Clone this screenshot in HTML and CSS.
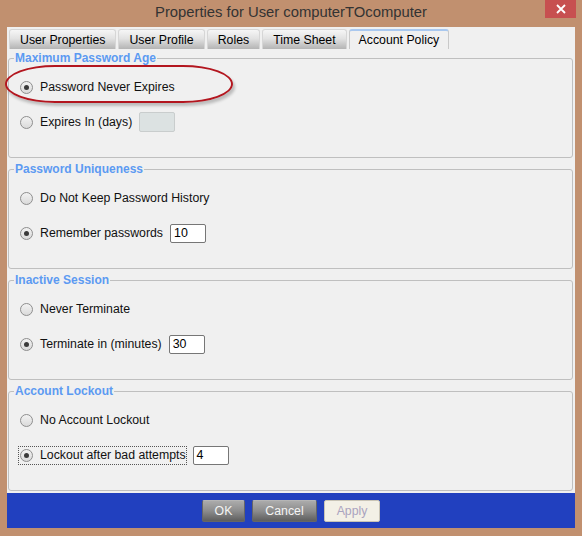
FILE: index.html
```html
<!DOCTYPE html>
<html lang="en">
<head>
  <meta charset="UTF-8">
  <title>Properties for User computerTOcomputer</title>
  <link rel="stylesheet" href="styles.css">
</head>
<body>
<div class="window">
  <div class="titlebar">
    <span></span>
    <span class="title">Properties for User computerTOcomputer</span>
    <span class="close">
      <svg width="10" height="10" viewBox="0 0 10 10"><path d="M1 1 L9 9 M9 1 L1 9" stroke="#fff" stroke-width="1.8"/></svg>
    </span>
  </div>

  <div class="frame">
    <div class="tabs">
      <div class="tab">User Properties</div>
      <div class="tab">User Profile</div>
      <div class="tab">Roles</div>
      <div class="tab">Time Sheet</div>
      <div class="tab active">Account Policy</div>
    </div>

    <div class="pane">
      <fieldset class="group">
        <legend>Maximum Password Age</legend>
        <div class="row">
          <label class="opt"><span class="radio checked"></span>Password Never Expires</label>
        </div>
        <div class="row">
          <label class="opt"><span class="radio"></span>Expires In (days)</label>
          <span class="field disabled"></span>
        </div>
      </fieldset>

      <fieldset class="group">
        <legend>Password Uniqueness</legend>
        <div class="row">
          <label class="opt"><span class="radio"></span>Do Not Keep Password History</label>
        </div>
        <div class="row">
          <label class="opt"><span class="radio checked"></span>Remember passwords</label>
          <span class="field">10</span>
        </div>
      </fieldset>

      <fieldset class="group">
        <legend>Inactive Session</legend>
        <div class="row">
          <label class="opt"><span class="radio"></span>Never Terminate</label>
        </div>
        <div class="row">
          <label class="opt"><span class="radio checked"></span>Terminate in (minutes)</label>
          <span class="field">30</span>
        </div>
      </fieldset>

      <fieldset class="group">
        <legend>Account Lockout</legend>
        <div class="row">
          <label class="opt"><span class="radio"></span>No Account Lockout</label>
        </div>
        <div class="row">
          <label class="opt focused"><span class="radio checked"></span>Lockout after bad attempts</label>
          <span class="field">4</span>
        </div>
      </fieldset>
    </div>

    <div class="buttons">
      <button class="btn">OK</button>
      <button class="btn">Cancel</button>
      <button class="btn off">Apply</button>
    </div>
  </div>

  <!-- red annotation ring drawn over the first option -->
  <div class="highlight"></div>
</div>
</body>
</html>
```

FILE: styles.css
```css
body {
  margin: 0;
  background: #c1906f;
  font-family: "Liberation Sans", Arial, sans-serif;
}

.window {
  position: relative;
  width: 582px;
  height: 536px;
  background: #c1906f;
}

.titlebar {
  display: grid;
  grid-template-columns: 1fr auto 1fr;
  align-items: start;
  height: 27px;
}
.title {
  padding-top: 3px;
  font-size: 14.8px;
  line-height: 18px;
  color: #333;
}
.close {
  justify-self: end;
  margin-right: 6px;
  width: 31px;
  height: 18px;
  background: #c75050;
  display: flex;
  align-items: center;
  justify-content: center;
}

.frame {
  margin: 0 7px;
  height: 501px;
  background: #f0f0f0;
  display: flex;
  flex-direction: column;
}

/* tabs */
.tabs {
  display: flex;
  gap: 2px;
  height: 22px;
  padding: 2px 0 0 2px;
  box-sizing: border-box;
}
.tab {
  height: 20px;
  padding: 0 10px;
  font-size: 12.3px;
  line-height: 20px;
  color: #000;
  border: 1px solid #d6d6d6;
  border-bottom: none;
  border-radius: 3px 3px 0 0;
  background: linear-gradient(#f6f6f6, #e2e2e2 45%, #b4b4b4);
  box-sizing: border-box;
}
.tab.active {
  background: #f0f0f0;
  border-color: #c9c9c9;
  border-top: 2px solid #a9c8ef;
  line-height: 18px;
  padding: 0 9px;
}

/* groups */
.pane {
  flex: 1;
  padding: 2px 2px 0 1px;
}
.group {
  margin: 4px 0 0;
  padding: 12px 10px 0 9px;
  height: 107px;
  box-sizing: border-box;
  border: 1px solid #bfbfbf;
  border-radius: 3px;
  display: flex;
  flex-direction: column;
  gap: 15px;
}
.group:first-child {
  margin-top: 0;
}
.group legend {
  padding: 0 1px;
  margin-left: -4px;
  font-size: 12px;
  font-weight: bold;
  line-height: 14px;
  color: #5c9af2;
}

.row {
  display: flex;
  align-items: center;
  height: 20px;
}
.opt {
  display: inline-flex;
  align-items: center;
  gap: 7px;
  height: 19px;
  padding-left: 1px;
  border: 1px dotted transparent;
  box-sizing: border-box;
  font-size: 12.3px;
  color: #111;
}
.opt.focused {
  border-color: #555;
}

.radio {
  width: 13px;
  height: 13px;
  border-radius: 50%;
  border: 1px solid #8e8e8e;
  box-sizing: border-box;
  background: linear-gradient(#f2f2f2, #dadada);
  display: flex;
  align-items: center;
  justify-content: center;
}
.radio.checked::after {
  content: "";
  width: 5px;
  height: 5px;
  border-radius: 50%;
  background: #3a3a3a;
}

.field {
  margin-left: 6px;
  width: 36px;
  height: 19px;
  box-sizing: border-box;
  border: 1px solid #767676;
  border-radius: 2px;
  background: #fff;
  padding-left: 3px;
  font-size: 12.4px;
  line-height: 17px;
  color: #000;
}
.field.disabled {
  height: 20px;
  background: #dce2e2;
  border-color: #c9cdcd;
}

/* bottom bar */
.buttons {
  height: 35px;
  background: #2140bf;
  display: flex;
  justify-content: center;
  align-items: center;
  gap: 7px;
}
.btn {
  height: 22px;
  padding: 0 12px;
  font-family: inherit;
  font-size: 12.3px;
  color: #f4f4f4;
  border: 1px solid #666;
  border-top-color: #b5b5b5;
  border-radius: 2px;
  background: linear-gradient(#ababab, #8c8c8c 50%, #5e5e5e);
}
.btn.off {
  color: #aaa3bf;
  background: #f3f0e6;
  border: 1px solid #c9c4b6;
}

.highlight {
  position: absolute;
  left: 5px;
  top: 65px;
  width: 228px;
  height: 38px;
  box-sizing: border-box;
  border: 2px solid #b3161f;
  border-radius: 50px / 19px;
  box-shadow: 2px 3px 3px rgba(0, 0, 0, 0.22);
}
```
